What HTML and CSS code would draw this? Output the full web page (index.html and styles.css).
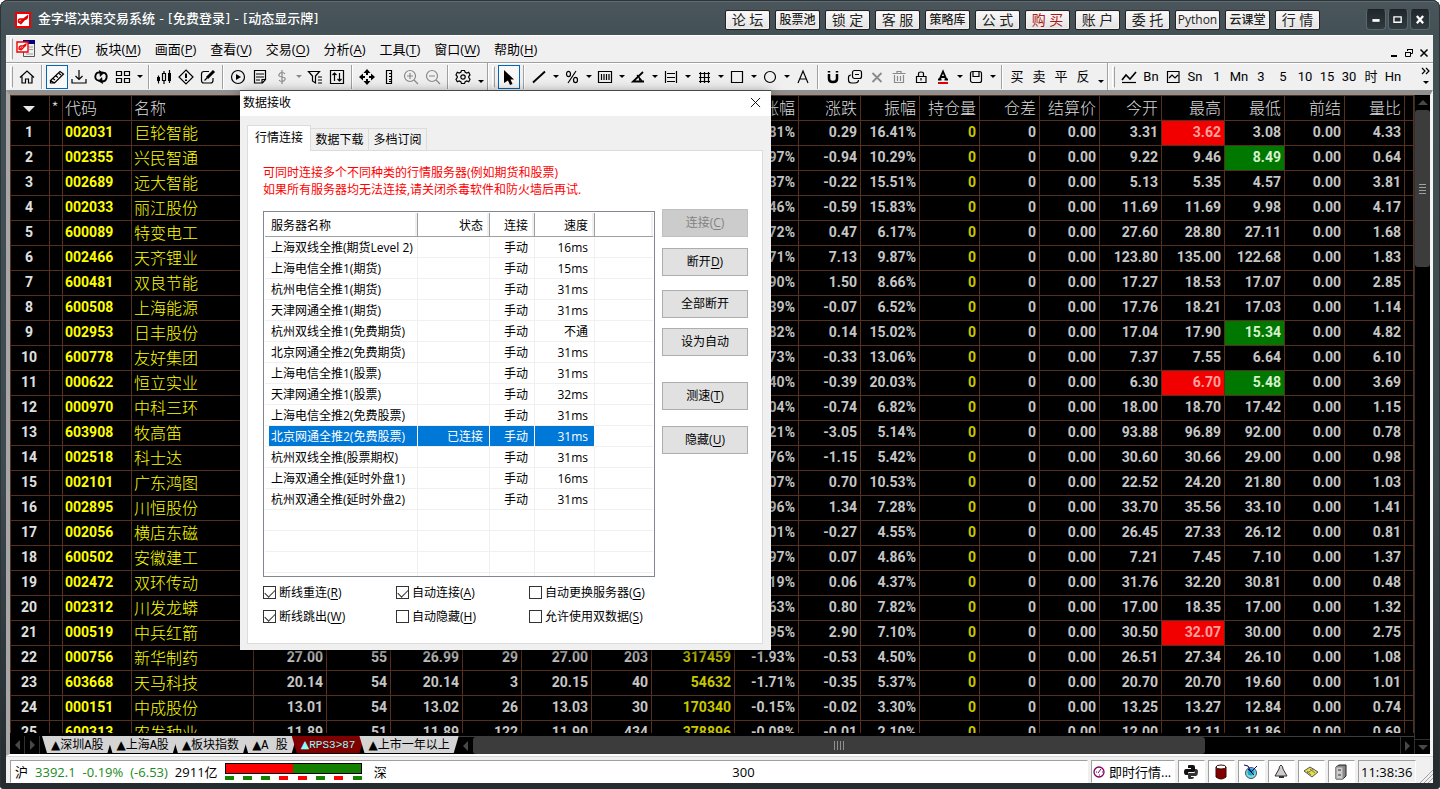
FILE: index.html
```html
<!DOCTYPE html>
<html lang="zh-CN">
<head>
<meta charset="utf-8">
<title>金字塔决策交易系统</title>
<link rel="stylesheet" href="styles.css">
</head>
<body>
<svg class="defs" aria-hidden="true">
  <symbol id="home" viewBox="0 0 16 16"><path d="M1 8.500 8 2l7 6.500M3 7.500V14h3.500v-4h3v4H13V7.500" /></symbol>
  <symbol id="link" viewBox="0 0 16 16"><path d="M1.500 11.500 11 2.500l3.500 2.500-9 9zM4 9.500l2 1.500M7 7l2 1.500M10 4.500l2 1.500M1.500 11.500v2.500h4" /></symbol>
  <symbol id="down" viewBox="0 0 16 16"><path d="M8 1v9M4.500 7 8 10.500 11.500 7M1 10v4h14v-4" /></symbol>
  <symbol id="sync" viewBox="0 0 16 16"><path stroke-width="1.800" d="M7 3.500C2 3 1 9 4 11l3 1M9 12.500c5 0 6-6 3-8.500L9 3.500"/><path fill="currentColor" stroke="none" d="M6 1l5 3-4 4zM10 15l-5-3 4-4z"/></symbol>
  <symbol id="tiles" viewBox="0 0 16 16"><path d="M1.500 2.500h5v4h-5zM9.500 2.500h5v4h-5zM1.500 9.500h5v4h-5zM9.500 9.500h5v4h-5z" /></symbol>
  <symbol id="candles" viewBox="0 0 16 16"><path d="M2.500 6.500v8M8 2v13M13.500 1v13"/><path fill="currentColor" stroke="none" d="M1 8h3v4H1zM12 4h3v8h-3z"/><path fill="#f0f0f0" d="M6.500 4.500h3v7h-3z"/></symbol>
  <symbol id="alert" viewBox="0 0 16 16"><path d="M8 1l7 7-7 7-7-7z"/><path stroke-width="2" d="M8 4.500V9M8 10.500v1.500"/></symbol>
  <symbol id="edit" viewBox="0 0 16 16"><path d="M9 2.500H4Q1.500 2.500 1.500 5v6.500Q1.500 14 4 14h6.500q2.500 0 2.500-2.500V9"/><path stroke-width="3" d="M14 2 7 9"/><path d="M4.500 11.500 7 9"/></symbol>
  <symbol id="play" viewBox="0 0 16 16"><circle cx="8" cy="8" r="6.500"/><path fill="currentColor" stroke="none" d="M6 5v6l5-3z"/></symbol>
  <symbol id="note" viewBox="0 0 16 16"><path d="M2.500 1.500h11v9l-3 3.500h-8zM4 5h8M4 8h8M13 10.500h-3V14M4 11h4"/></symbol>
  <symbol id="dollar" viewBox="0 0 16 16"><path d="M11 5Q10 3.500 8 3.500T5 5.500 8 8t3 2.500-3 2-3-1.500M8 1v14"/></symbol>
  <symbol id="filter" viewBox="0 0 16 16"><path d="M1.500 2.500h11L8.500 7v7l-3-2V7zM11 8h4M11 11h4M11 14h4"/></symbol>
  <symbol id="updown" viewBox="0 0 16 16"><path d="M1.500 1.500h13v13h-13zM5.500 12V4M3.500 6l2-2 2 2M10.500 4v8M8.500 10l2 2 2-2"/></symbol>
  <symbol id="move" viewBox="0 0 16 16"><path fill="currentColor" stroke="none" d="M8 0l3.500 4h-7zM8 16l3.500-4h-7zM0 8l4-3.500v7zM16 8l-4-3.500v7zM7 4h2v2H7zM7 10h2v2H7zM4 7h2v2H4zM10 7h2v2h-2z"/></symbol>
  <symbol id="ruler" viewBox="0 0 16 16"><path d="M5.500 1.500h5v13h-5zM8 4.500h2M8 7.500h2M8 10.500h2M8 12.500h2"/></symbol>
  <symbol id="zin" viewBox="0 0 16 16"><circle cx="7" cy="7" r="5.500"/><path d="M11 11l4 4M4 7h6M7 4v6"/></symbol>
  <symbol id="zout" viewBox="0 0 16 16"><circle cx="7" cy="7" r="5.500"/><path d="M11 11l4 4M4 7h6"/></symbol>
  <symbol id="gear" viewBox="0 0 16 16"><path d="M6.500 1.500h3l.7 1.800 1.600.7 1.900-.7 1.300 2.600-1.300 1.600v1L15 10.200l-1.300 2.500-1.900-.7-1.600.8-.7 1.700h-3l-.7-1.700-1.600-.8-1.900.7L1 10.200l1.300-1.700v-1L1 5.900l1.300-2.600 1.900.7 1.600-.7z"/><circle cx="8" cy="8" r="2.200"/></symbol>
  <symbol id="pointer" viewBox="0 0 16 16"><path fill="currentColor" stroke="none" d="M3 1l10 9.500H9.500l2 4.500-2.500 1-2-4.500L3 14z"/></symbol>
  <symbol id="line" viewBox="0 0 16 16"><path stroke-width="1.800" d="M2 13.500 14 2.500"/></symbol>
  <symbol id="percent" viewBox="0 0 16 16"><ellipse cx="4.500" cy="5" rx="2" ry="2.700"/><ellipse cx="11.500" cy="11" rx="2" ry="2.700"/><path d="M12 2 4 14"/></symbol>
  <symbol id="bars" viewBox="0 0 16 16"><path d="M1.500 2.500h13v11h-13zM4.500 5v6M7 5v6M9.500 5v6M12 5v6"/></symbol>
  <symbol id="angle" viewBox="0 0 16 16"><path stroke-width="1.800" d="M13 3 3 12.500h11"/><path d="M7 6l5 6M9 8l1 4"/></symbol>
  <symbol id="hlines" viewBox="0 0 16 16"><path d="M2.500 2v12M13.500 2v12M4 4.500h8M4 8.500h8M4 12.500h8"/></symbol>
  <symbol id="hash" viewBox="0 0 16 16"><path d="M4.500 3v11M8.500 3v11M12.500 3v11M3 4.500h11M3 8.500h11M3 12.500h11"/></symbol>
  <symbol id="square" viewBox="0 0 16 16"><path d="M2.500 2.500h11v11h-11z"/></symbol>
  <symbol id="circle" viewBox="0 0 16 16"><circle cx="8" cy="8" r="5.500"/></symbol>
  <symbol id="text" viewBox="0 0 16 16"><path d="M3 14 8 2l5 12M5 10h6"/></symbol>
  <symbol id="magnet" viewBox="0 0 16 16"><path stroke-width="2.500" d="M4 5v5q0 3 4 3t4-3V5"/><path stroke-width="2.500" d="M4 2v1.500M12 2v1.500"/></symbol>
  <symbol id="copy" viewBox="0 0 16 16"><rect x="5.500" y="1.500" width="9" height="8" rx="2"/><path d="M4 6Q1.500 6 1.500 8.500v2.500q0 3 3 3h3q4 0 4-3M8 5.500h4"/></symbol>
  <symbol id="cross" viewBox="0 0 16 16"><path stroke-width="1.800" d="M3.500 4l9 9M12.500 4l-9 9"/></symbol>
  <symbol id="trash" viewBox="0 0 16 16"><path d="M1.500 4.500h13M6 4V2.500h4V4M3.500 6v7.500h9V6M6.500 7v5M9.500 7v5"/></symbol>
  <symbol id="lock" viewBox="0 0 16 16"><path d="M3.500 7.500h9.500v6h-9.500zM5.500 7V4.500Q5.500 3 8 3t2.500 1.500V7M8 9v2.500"/></symbol>
  <symbol id="fontcolor" viewBox="0 0 16 16"><path stroke-width="1.800" d="M4.500 10.500 8 2.500l3.500 8M6 8h4M3 10.500h3.500M9.500 10.500H13"/><path stroke="#e00000" stroke-width="2" d="M3 14h10"/></symbol>
  <symbol id="save" viewBox="0 0 16 16"><rect x="2.500" y="2.500" width="11" height="11" rx="2"/><path d="M5 3v4.500h6V3"/></symbol>
  <symbol id="chart" viewBox="0 0 16 16"><path stroke-width="1.600" d="M1 11l4-5 4 4 6-7"/><path d="M1 13.500h14"/></symbol>
  <symbol id="chartbox" viewBox="0 0 16 16"><path d="M2.500 2.500h11.500v11H2.500zM4 9l3-3 3 3 3-3"/></symbol>
</svg>

<div class="window">
  <header class="titlebar">
    <svg class="logo" viewBox="0 0 16 16"><path fill="#f00000" d="M0 0h16v16H0z"/><path fill="#fff" d="M2 2h12v12H2z"/><path fill="none" stroke="#e00000" stroke-width="1.500" d="M6 11.500 3.500 10q-.5-3 2-3h3L12.500 4q0 3-3 3.500L6 11.500l-1-1.500 3-2.500"/></svg>
    <h1>金字塔决策交易系统 - [免费登录] - [动态显示牌]</h1>
    <nav class="quick">
      <button>论 坛</button><button class="tight">股票池</button><button>锁 定</button><button>客 服</button><button class="tight">策略库</button><button>公 式</button><button class="buy">购 买</button><button>账 户</button><button>委 托</button><button class="tight">Python</button><button class="tight">云课堂</button><button>行 情</button>
    </nav>
    <div class="controls">
      <button aria-label="最小化"><svg viewBox="0 0 20 20"><path d="M6 10.500h8" stroke-width="3"/></svg></button>
      <button aria-label="最大化"><svg viewBox="0 0 20 20"><path d="M5.500 6.500h8v6h-8z"/></svg></button>
      <button aria-label="关闭"><svg viewBox="0 0 20 20"><path d="M6.500 5.500l7 8M13.500 5.500l-7 8" stroke-width="2.500"/></svg></button>
    </div>
  </header>

  <div class="menubar">
    <span class="grip"></span>
    <svg class="docicon" viewBox="0 0 20 18"><path fill="#f0f0f0" stroke="#555" d="M7.500 1.500h11v15h-11z"/><path fill="#000080" d="M7 0h12v4H7z"/><path stroke="#999" d="M13 7h4M13 9.500h4M10 14h7"/><path fill="#fff" stroke="#e00" stroke-width="1.400" d="M1 2h11v10H1z"/><path fill="none" stroke="#e00" stroke-width="1.300" d="M5 10 3 9q0-3 2-3h2L10 4q0 2-2 3l-3 3M4 8.500l2-1"/></svg>
    <nav>
      <a href="#">文件(<u>F</u>)</a><a href="#">板块(<u>M</u>)</a><a href="#">画面(<u>P</u>)</a><a href="#">查看(<u>V</u>)</a><a href="#">交易(<u>O</u>)</a><a href="#">分析(<u>A</u>)</a><a href="#">工具(<u>T</u>)</a><a href="#">窗口(<u>W</u>)</a><a href="#">帮助(<u>H</u>)</a>
    </nav>
    <div class="mdi">
      <button aria-label="最小化窗口"><svg viewBox="0 0 10 10"><path d="M2 8h6" stroke-width="2"/></svg></button>
      <button aria-label="还原窗口"><svg viewBox="0 0 10 10"><path d="M3.500 3V1.500h5v4H7M3 1.500h6M1.500 4.500h5v4h-5zM1 4.500h6"/></svg></button>
      <button aria-label="关闭窗口"><svg viewBox="0 0 10 10"><path d="M1.500 1.500l7 7M8.500 1.500l-7 7" stroke-width="1.500"/></svg></button>
    </div>
  </div>

  <div class="toolbar" id="toolbar"></div>

  <main class="workspace">
    <div class="pane">
      <div class="quotes"><table id="quotes"></table></div>
      <div class="sheetbar">
        <button class="nav" aria-label="上一页"><i class="tri left"></i></button>
        <button class="nav" aria-label="下一页"><i class="tri right"></i></button>
        <nav class="sheets">
          <button><i>▲</i>深圳A股</button><button><i>▲</i>上海A股</button><button><i>▲</i>板块指数</button><button><i>▲</i>A 股</button><button class="on"><i>▲</i>RPS3&gt;87</button><button><i>▲</i>上市一年以上</button>
        </nav>
        <div class="hscroll">
          <span class="arrow"><i class="tri left"></i></span>
          <span class="track"><span class="thumb"><i></i><i></i><i></i><i></i></span></span>
          <span class="arrow end"><i class="tri right"></i></span>
        </div>
      </div>
    </div>
    <div class="vscroll">
      <span class="arrow"><i class="tri up"></i></span>
      <span class="track"><span class="thumb"><i></i><i></i><i></i><i></i></span></span>
      <span class="arrow end"><i class="tri dn"></i></span>
    </div>
  </main>

  <footer class="status">
    <div class="cell indices">
      <div class="index"><span>沪</span><span class="down">3392.1</span><span class="down">-0.19%</span><span class="down">(-6.53)</span><span>2911亿</span>
        <div class="gauge"><div class="bar"><b></b></div><div class="dashes"><i></i><i></i><i></i><i class="r"></i><i class="r"></i><i></i><i class="r"></i><i></i></div></div>
      </div>
      <div class="index">深</div>
      <div class="index">300</div>
    </div>
    <div class="cell news"><svg viewBox="0 0 12 12"><circle cx="6" cy="6" r="5" fill="#fff" stroke="#800060" stroke-width="1.300"/><path d="M5 7l3-4M3 6h1M9 6h1M6 9h1" stroke="#800060"/></svg>即时行情...</div>
    <div class="cell ico"><svg viewBox="0 0 16 16"><path d="M5 2q0-1 1-1h4q2 0 2 2v4q0 1-1 1H6q-1 0-1 1v2H3q-2 0-2-3t2-3h5V4H5z" fill="#111"/><path d="M11 13q0 2-2 2H6q-1 0-1-2v-3q0-1 1-1h5q1 0 1-1V5h1q2 0 2 3t-2 4H8v1z" fill="#333"/></svg></div>
    <div class="cell ico"><svg viewBox="0 0 16 16"><path d="M3 3v10q5 4 10 0V3z" fill="#800000" stroke="#400000"/><ellipse cx="8" cy="3" rx="5" ry="2" fill="#fff" stroke="#400000"/></svg></div>
    <div class="cell ico"><svg viewBox="0 0 16 16"><circle cx="8" cy="9" r="5.500" fill="#80d8e0" stroke="#405060"/><circle cx="8" cy="8" r="3.500" fill="#20a8b8"/><path d="M1 1l4 1 3 6M14 2 8 8M5 5l6 6" stroke="#000080" fill="none"/></svg></div>
    <div class="cell ico"><svg viewBox="0 0 16 16"><path d="M8 1q-2 1-2 4l-4 7h12l-4-7q0-3-2-4z" fill="#ccc" stroke="#333"/><path d="M6 13h5" stroke="#333" stroke-width="2"/></svg></div>
    <div class="cell ico"><svg viewBox="0 0 16 16"><path d="M1 7l6-4 8 5-6 5z" fill="#e8e040" stroke="#555"/><path d="M4 7l4 4M7 5l5 4M4 9l7-4" stroke="#777"/></svg></div>
    <div class="cell ico"><svg viewBox="0 0 16 16"><path d="M3 3l3-2h7v11l-3 3H3z" fill="#888" stroke="#222"/><path d="M3 3h7v12H3z" fill="#ccc" stroke="#888"/><path d="M5 6h3M5 11h3" stroke="#333"/></svg></div>
    <div class="cell clock">11:38:36</div>
    <svg class="sizer" viewBox="0 0 14 16"><path d="M1 16 14 3M5 16l9-9M9 16l5-5"/></svg>
  </footer>
</div>

<section class="dialog" role="dialog" aria-label="数据接收">
  <header><span>数据接收</span><button aria-label="关闭"><svg viewBox="0 0 12 12"><path d="M1 1l10 10M11 1 1 11"/></svg></button></header>
  <div class="tabs"><button class="on">行情连接</button><button>数据下载</button><button>多档订阅</button></div>
  <div class="sheet">
    <p>可同时连接多个不同种类的行情服务器(例如期货和股票)<br>如果所有服务器均无法连接,请关闭杀毒软件和防火墙后再试.</p>
    <div class="body">
      <div class="list"><table id="servers"></table></div>
      <div class="actions">
        <button disabled>连接(<u>C</u>)</button>
        <button>断开<u>D</u>)</button>
        <button>全部断开</button>
        <button>设为自动</button>
        <button>测速(<u>T</u>)</button>
        <button>隐藏(<u>U</u>)</button>
      </div>
    </div>
    <div class="checks">
      <label><input type="checkbox" checked>断线重连(<u>R</u>)</label>
      <label><input type="checkbox" checked>自动连接(<u>A</u>)</label>
      <label><input type="checkbox">自动更换服务器(<u>G</u>)</label>
      <label><input type="checkbox" checked>断线跳出(<u>W</u>)</label>
      <label><input type="checkbox">自动隐藏(<u>H</u>)</label>
      <label><input type="checkbox">允许使用双数据(<u>S</u>)</label>
    </div>
  </div>
</section>
<script src="script.js"></script>
</body>
</html>
```

FILE: styles.css
```css
* { box-sizing: border-box; }
body {
  margin: 0;
  height: 100vh;
  overflow: hidden;
  position: relative;
  background: #fff;
  color: #000;
  font: 13px/20px "Open Sans", "Noto Sans CJK SC", sans-serif;
}
button { margin: 0; padding: 0; border: 0; background: none; color: inherit; font: inherit; }
a { color: inherit; text-decoration: none; }
u { text-underline-offset: 2px; }
i { font-style: normal; }
svg { display: block; fill: none; stroke: none; }
.defs { position: absolute; width: 0; height: 0; }

.window {
  height: 100%;
  display: flex;
  flex-direction: column;
  padding: 0 7px 6px 6px;
  border-radius: 8px 8px 4px 4px;
  background: linear-gradient(#4a565c 0, #435055 35px, #3d4a50 60%, #262d31 97%);
  box-shadow: inset 0 1px #2c3438, inset 1px 0 #2c3438, inset -1px 0 #2c3438, inset 0 2px #616d72;
}

/* title bar */
.titlebar { flex: none; height: 35px; display: flex; align-items: center; padding: 4px 3px 0 9px; }
.logo { width: 16px; height: 16px; margin-right: 7px; }
h1 { flex: 1; margin: 0; padding-bottom: 1px; color: #fff; font: 500 13px/20px "DejaVu Sans", "Noto Sans CJK SC", sans-serif; white-space: nowrap; }
.quick { display: flex; gap: 5px; margin-right: 46px; }
.quick button {
  width: 45px;
  height: 20px;
  border: 1px solid #222;
  border-radius: 2px;
  background: linear-gradient(#fafafa, #e2e2e2);
  box-shadow: inset 0 0 0 1px #f6f0f0;
  font: 400 14px/17px "Open Sans", "Noto Sans CJK SC", sans-serif;
  color: #222;
  white-space: nowrap;
}
.quick .tight { font-size: 12px; font-weight: 500; }
.quick .buy { color: #b01818; }
.controls { display: flex; gap: 2px; }
.controls button { width: 20px; height: 21px; border-radius: 4px; background: linear-gradient(#20282c, #303a3f); border: 1px solid #59666c; border-top-color: #1c2326; }
.controls svg { width: 18px; height: 18px; stroke: #fff; stroke-width: 1.5; }

/* menu bar */
.menubar { flex: none; height: 27px; display: flex; align-items: center; padding-left: 4px; background: #f0f0f0; border-top: 1px solid #fff; }
.grip { flex: none; width: 3px; height: 22px; border: 1px solid #fff; border-right-color: #a0a0a0; margin-right: 3px; }
.docicon { width: 20px; height: 18px; }
.menubar nav { flex: 1; display: flex; margin-left: -2px; }
.menubar a { padding: 0 7px; line-height: 24px; }
.mdi { display: flex; gap: 5px; align-self: flex-end; padding: 0 4px 4px 0; }
.mdi svg { width: 10px; height: 10px; stroke: #000; }

/* tool bar */
.toolbar { flex: none; height: 28px; display: flex; align-items: center; padding-left: 4px; background: #f0f0f0; border-top: 1px solid #a0a0a0; box-shadow: inset 0 1px #fff; }
.toolbar .grip { margin-right: 3px; }
.toolbar button { flex: none; width: 22px; height: 24px; display: grid; place-items: center; font-size: 12px; line-height: 16px; }
.toolbar button.on { border: 1px solid #0067b8; background: #f8f8f8; }
.toolbar svg { width: 16px; height: 16px; stroke: currentColor; stroke-width: 1.2; }
.toolbar .off { color: #8a8a8a; }
.toolbar .word { font-family: Roboto, "Noto Sans CJK SC", sans-serif; font-size: 13px; }
.toolbar .caret { width: 11px; }
.toolbar .caret::before { content: ""; border: 3px solid transparent; border-top-color: currentColor; border-bottom-width: 0; }
.toolbar .low { width: 13px; padding-top: 10px; }
.sep { flex: none; width: 8px; height: 24px; border-left: 1px solid #a0a0a0; background: linear-gradient(90deg, #fff 1px, transparent 1px); margin-left: 3px; margin-right: -3px; }
.band { flex: none; width: 2px; height: 27px; border-left: 1px solid #a0a0a0; background: #fff; margin-right: 3px; }
.more { margin-left: auto; margin-right: -3px; }
.toolbar .more button { width: 20px; height: 12px; }
.toolbar .more svg { width: 10px; height: 8px; }

/* workspace */
.workspace {
  flex: 1;
  min-height: 0;
  display: flex;
  background: #000;
  border: solid;
  border-width: 5px 3px 2px 4px;
  border-color: #909090 #f4f4f4 #fff #a8a8a8;
}
.pane { flex: 1; min-width: 0; display: flex; flex-direction: column; }
.quotes { flex: 1; min-height: 0; overflow: hidden; margin-bottom: 3px; border-left: 1px solid #55301f; }
.quotes table { width: 100%; table-layout: fixed; border-collapse: separate; border-spacing: 0; border-top: 1px solid #55301f; }
.quotes th, .quotes td {
  height: 25px;
  padding: 0 3px 1px 0;
  border-right: 1px solid #55301f;
  border-bottom: 1px solid #55301f;
  color: #c6c6c6;
  font: 700 14px/23px Roboto, sans-serif;
  text-align: right;
  white-space: nowrap;
  overflow: hidden;
}
.quotes th { padding-bottom: 2px; font: 300 16px/22px "Noto Sans CJK SC", sans-serif; color: #dcdcdc; }
.quotes .l { text-align: left; padding-left: 2px; padding-right: 0; }
.quotes .c { text-align: center; padding-left: 0; padding-right: 2px; color: #e0e0e0; }
.quotes .y { color: #c8c800; }
.quotes .code, .quotes .name { color: #ff0; }
.quotes .name { font: 300 16px/22px "Noto Sans CJK SC", sans-serif; padding-bottom: 2px; }
.quotes .hi { background: #f20000; color: #ffa0a0; }
.quotes .lo { background: #007800; color: #d8f0d0; }
.sortmark { display: inline-block; border: 6px solid transparent; border-top-color: #e8e8e8; border-bottom-width: 0; vertical-align: 2px; }

.tri { display: block; width: 0; height: 0; border: 5px solid transparent; }
.tri.left { border-right-color: #484848; border-left-width: 0; }
.tri.right { border-left-color: #484848; border-right-width: 0; }
.tri.up { border-bottom-color: #484848; border-top-width: 0; }
.tri.dn { border-top-color: #484848; border-bottom-width: 0; }

.sheetbar { flex: none; height: 18px; display: flex; color: #000; }
.nav { width: 15px; display: grid; place-items: center; border-right: 1px solid #303030; }
.sheets { display: flex; margin-left: 2px; }
.sheets button {
  height: 17px;
  padding: 1px 9px 0;
  background: #d4d4d4;
  clip-path: polygon(0 0, 100% 0, calc(100% - 5px) 100%, 5px 100%);
  font: 12px/16px "Liberation Mono", "Noto Sans CJK SC", monospace;
  white-space: nowrap;
}
.sheets i { font-family: "DejaVu Sans", sans-serif; }
.sheets button + button { margin-left: -5px; }
.sheets .on { background: #800000; color: #8ff; font-size: 11px; }
.hscroll { flex: 1; display: flex; border-top: 1px solid #3c3c3c; }
.arrow { flex: none; display: grid; place-items: center; }
.hscroll .arrow { width: 14px; }
.hscroll .end { border-left: 1px solid #303030; }
.track { flex: 1; display: flex; }
.thumb { display: flex; align-items: center; justify-content: center; gap: 2px; background: #3c3c3c; border-radius: 3px; }
.hscroll .thumb { width: 79%; }
.hscroll .thumb i { width: 1px; height: 9px; background: #909090; }
.vscroll { flex: none; width: 16px; display: flex; flex-direction: column; border-left: 1px solid #303030; }
.vscroll .arrow { height: 15px; }
.vscroll .end { border-top: 1px solid #303030; }
.vscroll .track { align-items: flex-start; }
.vscroll .thumb { flex: 1; height: 25%; flex-direction: column; }
.vscroll .thumb i { width: 7px; height: 1px; background: #a0a0a0; }

/* status bar */
.status { flex: none; height: 27px; display: flex; gap: 3px; padding: 3px 0 0 4px; background: #f0f0f0; border-top: 1px solid #d8d8d8; }
.cell { display: flex; align-items: center; background: #fff; border: 1px solid #a0a0a0; border-right-color: #fff; border-bottom-color: #fff; white-space: nowrap; }
.indices { flex: 1; }
.index { flex: 1; display: flex; align-items: center; gap: 7px; padding-left: 4px; }
.down { color: #1a8a1a; }
.gauge { width: 137px; }
.bar { height: 11px; border: 1px solid #000; background: #148000; }
.bar b { display: block; width: 50%; height: 100%; background: #f00; }
.dashes { display: flex; justify-content: space-between; margin-top: 2px; }
.dashes i { width: 9px; height: 4px; background: #148000; }
.dashes .r { background: #f00; }
.news { width: 84px; gap: 4px; padding-left: 1px; }
.news svg { width: 12px; height: 12px; }
.ico { width: 27px; padding-left: 4px; }
.ico svg { width: 16px; height: 16px; }
.clock { width: 58px; padding-left: 2px; background: #f0f0f0; }
.sizer { width: 14px; height: 16px; align-self: flex-end; stroke: #a0a0a0; }

/* dialog */
.dialog {
  position: absolute;
  left: 240px;
  top: 90px;
  width: 531px;
  display: flex;
  flex-direction: column;
  background: #f0f0f0;
  border-top: 1px solid #484848;
  box-shadow: 0 3px 12px rgba(0, 0, 0, .5);
  font-size: 12px;
  line-height: 17px;
}
.dialog > header { height: 25px; display: flex; align-items: center; justify-content: space-between; padding: 0 10px 2px 3px; background: #fff; }
.dialog > header svg { width: 11px; height: 11px; stroke: #000; }
.tabs { display: flex; align-items: flex-end; padding: 9px 0 0 7px; }
.tabs button { width: 58px; height: 22px; border: 1px solid #dcdcdc; border-left: 0; border-bottom: 0; background: #f0f0f0; }
.tabs .on { position: relative; width: 64px; height: 26px; margin-bottom: -1px; padding-bottom: 2px; border-left: 1px solid #dcdcdc; background: #fff; }
.sheet { margin: 0 8px 6px 7px; padding: 13px 13px 18px 15px; background: #fff; border: 1px solid #dcdcdc; }
.sheet p { margin: 0 0 13px; color: #f00; }
.body { display: flex; gap: 7px; }
.list { width: 392px; height: 366px; padding: 1px; border: 1px solid #828790; overflow: hidden; }
.list table { width: 100%; table-layout: fixed; border-collapse: separate; border-spacing: 0; }
.list th, .list td { height: 21px; padding: 2px 6px 0 0; text-align: right; font-weight: 400; line-height: 18px; border-right: 1px solid #f0f0f0; border-bottom: 1px solid #f0f0f0; white-space: nowrap; }
.list th { height: 24px; border-right-color: #a0a0a0; border-bottom-color: #a0a0a0; box-shadow: inset -2px 0 #f0f0f0; }
.list th:first-child, .list td:first-child { text-align: left; padding-left: 6px; padding-right: 0; }
.list th:last-child, .list td:last-child { border-right: 0; }
.list .sel td { background: #0078d7; color: #fff; border-right-color: #fff; }
.list .sel td:first-child { background: linear-gradient(90deg, #fff 4px, #0078d7 4px); }
.list .sel td:last-child { background: #fff; }
.actions { width: 86px; display: flex; flex-direction: column; margin-top: -2px; }
.actions button { height: 28px; margin-bottom: 11px; padding-bottom: 2px; background: #e1e1e1; border: 1px solid #adadad; }
.actions button:nth-child(2) { margin-bottom: 14px; }
.actions button:nth-child(3) { margin-bottom: 10px; }
.actions button:nth-child(4) { margin-bottom: 26px; }
.actions button:nth-child(5) { margin-bottom: 16px; }
.actions button:disabled { background: #ccc; border-color: #bfbfbf; color: #838383; }
.checks { display: grid; grid-template-columns: 133px 133px 1fr; row-gap: 7px; margin-top: 7px; }
.checks label { display: flex; align-items: center; white-space: nowrap; }
.checks input { appearance: none; width: 13px; height: 13px; margin: 0 3px 0 0; border: 1px solid #333; background: #fff; display: grid; place-items: center; }
.checks input:checked::before { content: ""; width: 9px; height: 5px; border: solid #333; border-width: 0 0 1px 1px; transform: translateY(-1px) rotate(-45deg); }
```

FILE: script.js
```js
// Tool bar: "|" separator, "v" drop-down caret, "," low caret,
// "!" disabled, "*" pressed, "=" text button.
const bands = [
  "home | *link down sync tiles v | candles alert edit | play note !dollar !v filter updown | move ruler !zin !zout | gear ,",
  "*pointer | line v percent v bars v angle v hlines v hash v square v circle v text | magnet copy !cross !trash lock fontcolor v save v | =买 =卖 =平 =反 ,",
  "chart =Bn chartbox =Sn =1 =Mn =3 =5 =10 =15 =30 =时 =Hn"
];
const tool = t => {
  if (t === "|") return '<span class="sep"></span>';
  if (t === ",") return '<button class="caret low" aria-label="更多"></button>';
  const off = t[0] === "!" ? " off" : "", on = t[0] === "*" ? "on" : "";
  const n = t.replace(/^[!*]/, "");
  if (n === "v") return `<button class="caret${off}" aria-label="展开"></button>`;
  if (n[0] === "=") return `<button class="word">${n.slice(1)}</button>`;
  return `<button class="${on}${off}" aria-label="${n}"><svg><use href="#${n}"/></svg></button>`;
};
document.getElementById("toolbar").innerHTML =
  bands.map(b => '<span class="grip"></span>' + b.split(" ").map(tool).join("")).join('<span class="band"></span>') +
  '<div class="more"><button aria-label="更多工具"><svg viewBox="0 0 10 8"><path d="M1 1l3 3-3 3M5 1l3 3-3 3"/></svg></button><button class="caret" aria-label="选项"></button></div>';

// Quote board: code, name, change %, change, amplitude, open, high, low, volume ratio
const quotes = `002031 巨轮智能 9.81% 0.29 16.41% 3.31 +3.62 3.08 4.33
002355 兴民智通 -9.97% -0.94 10.29% 9.22 9.46 -8.49 0.64
002689 远大智能 -4.37% -0.22 15.51% 5.13 5.35 4.57 3.81
002033 丽江股份 -5.46% -0.59 15.83% 11.69 11.69 9.98 4.17
600089 特变电工 1.72% 0.47 6.17% 27.60 28.80 27.11 1.68
002466 天齐锂业 5.71% 7.13 9.87% 123.80 135.00 122.68 1.83
600481 双良节能 8.90% 1.50 8.66% 17.27 18.53 17.07 2.85
600508 上海能源 -0.39% -0.07 6.52% 17.76 18.21 17.03 1.14
002953 日丰股份 0.82% 0.14 15.02% 17.04 17.90 -15.34 4.82
600778 友好集团 -4.73% -0.33 13.06% 7.37 7.55 6.64 6.10
000622 恒立实业 -6.40% -0.39 20.03% 6.30 +6.70 -5.48 3.69
000970 中科三环 -4.04% -0.74 6.82% 18.00 18.70 17.42 1.15
603908 牧高笛 -3.21% -3.05 5.14% 93.88 96.89 92.00 0.78
002518 科士达 -3.76% -1.15 5.42% 30.60 30.66 29.00 0.98
002101 广东鸿图 3.07% 0.70 10.53% 22.52 24.20 21.80 1.03
002895 川恒股份 3.96% 1.34 7.28% 33.70 35.56 33.10 1.41
002056 横店东磁 -1.01% -0.27 4.55% 26.45 27.33 26.12 0.81
600502 安徽建工 0.97% 0.07 4.86% 7.21 7.45 7.10 1.37
002472 双环传动 0.19% 0.06 4.37% 31.76 32.20 30.81 0.48
002312 川发龙蟒 4.63% 0.80 7.82% 17.00 18.35 17.00 1.32
000519 中兵红箭 9.95% 2.90 7.10% 30.50 +32.07 30.00 2.75
000756 新华制药 -1.93% -0.53 4.50% 26.51 27.34 26.10 1.08 27.00 55 26.99 29 27.00 203 317459
603668 天马科技 -1.71% -0.35 5.37% 20.70 20.70 19.60 1.01 20.14 54 20.14 3 20.15 40 54632
000151 中成股份 -0.15% -0.02 3.30% 13.25 13.27 12.84 0.74 13.01 54 13.02 26 13.03 30 170340
600313 农发种业 -0.08% -0.01 2.10% 12.00 12.11 11.86 0.69 11.89 51 11.89 122 11.90 434 378896`;
const widths = [39, 13, 69, 122, 73, 64, 72, 59, 70, 60, 83, 64, 62, 59, 60, 60, 60, 62, 63, 60, 60, 60];
const td = (v, c = "") => `<td class="${c}">${v}</td>`;
const row = (line, i) => {
  const [code, name, pct, chg, amp, open, high, low, ratio, ...book] = line.split(" ");
  const cells = Array.from({ length: 7 }, (_, k) => td(book[k] || "", k === 6 ? "y" : ""));
  return "<tr>" + td(i + 1, "c") + td("") + td(code, "l code") + td(name, "l name") + cells.join("") +
    td(pct) + td(chg) + td(amp) + td(0, "y") + td(0) + td("0.00") + td(open) +
    td(high.replace("+", ""), high[0] === "+" ? "hi" : "") + td(low.replace("-", ""), low[0] === "-" ? "lo" : "") +
    td("0.00") + td(ratio) + td("") + "</tr>";
};
document.getElementById("quotes").innerHTML =
  "<colgroup>" + widths.map(w => `<col style="width:${w}px">`).join("") + "<col></colgroup><thead><tr>" +
  '<th class="c"><i class="sortmark"></i></th><th class="c">*</th><th class="l">代码</th><th class="l">名称</th>' +
  "<th></th>".repeat(7) +
  ["涨幅", "涨跌", "振幅", "持仓量", "仓差", "结算价", "今开", "最高", "最低", "前结", "量比", ""].map(t => `<th>${t}</th>`).join("") +
  "</tr></thead><tbody>" + quotes.split("\n").map(row).join("") + "</tbody>";

// Data servers
const servers = [
  ["上海双线全推(期货Level 2)", "16ms"], ["上海电信全推1(期货)", "15ms"], ["杭州电信全推1(期货)", "31ms"],
  ["天津网通全推1(期货)", "31ms"], ["杭州双线全推1(免费期货)", "不通"], ["北京网通全推2(免费期货)", "31ms"],
  ["上海电信全推1(股票)", "31ms"], ["天津网通全推1(股票)", "32ms"], ["上海电信全推2(免费股票)", "31ms"],
  ["北京网通全推2(免费股票)", "31ms", "已连接"], ["杭州双线全推(股票期权)", "31ms"],
  ["上海双通全推(延时外盘1)", "16ms"], ["杭州双通全推(延时外盘2)", "31ms"]
];
document.getElementById("servers").innerHTML =
  "<colgroup>" + [153, 72, 45, 60].map(w => `<col style="width:${w}px">`).join("") + "<col></colgroup>" +
  "<thead><tr><th>服务器名称</th><th>状态</th><th>连接</th><th>速度</th><th></th></tr></thead><tbody>" +
  servers.map(([n, s, st = ""]) => `<tr class="${st ? "sel" : ""}">` + td(n) + td(st) + td("手动") + td(s) + td("") + "</tr>").join("") +
  ("<tr>" + "<td></td>".repeat(5) + "</tr>").repeat(4) + "</tbody>";
```
